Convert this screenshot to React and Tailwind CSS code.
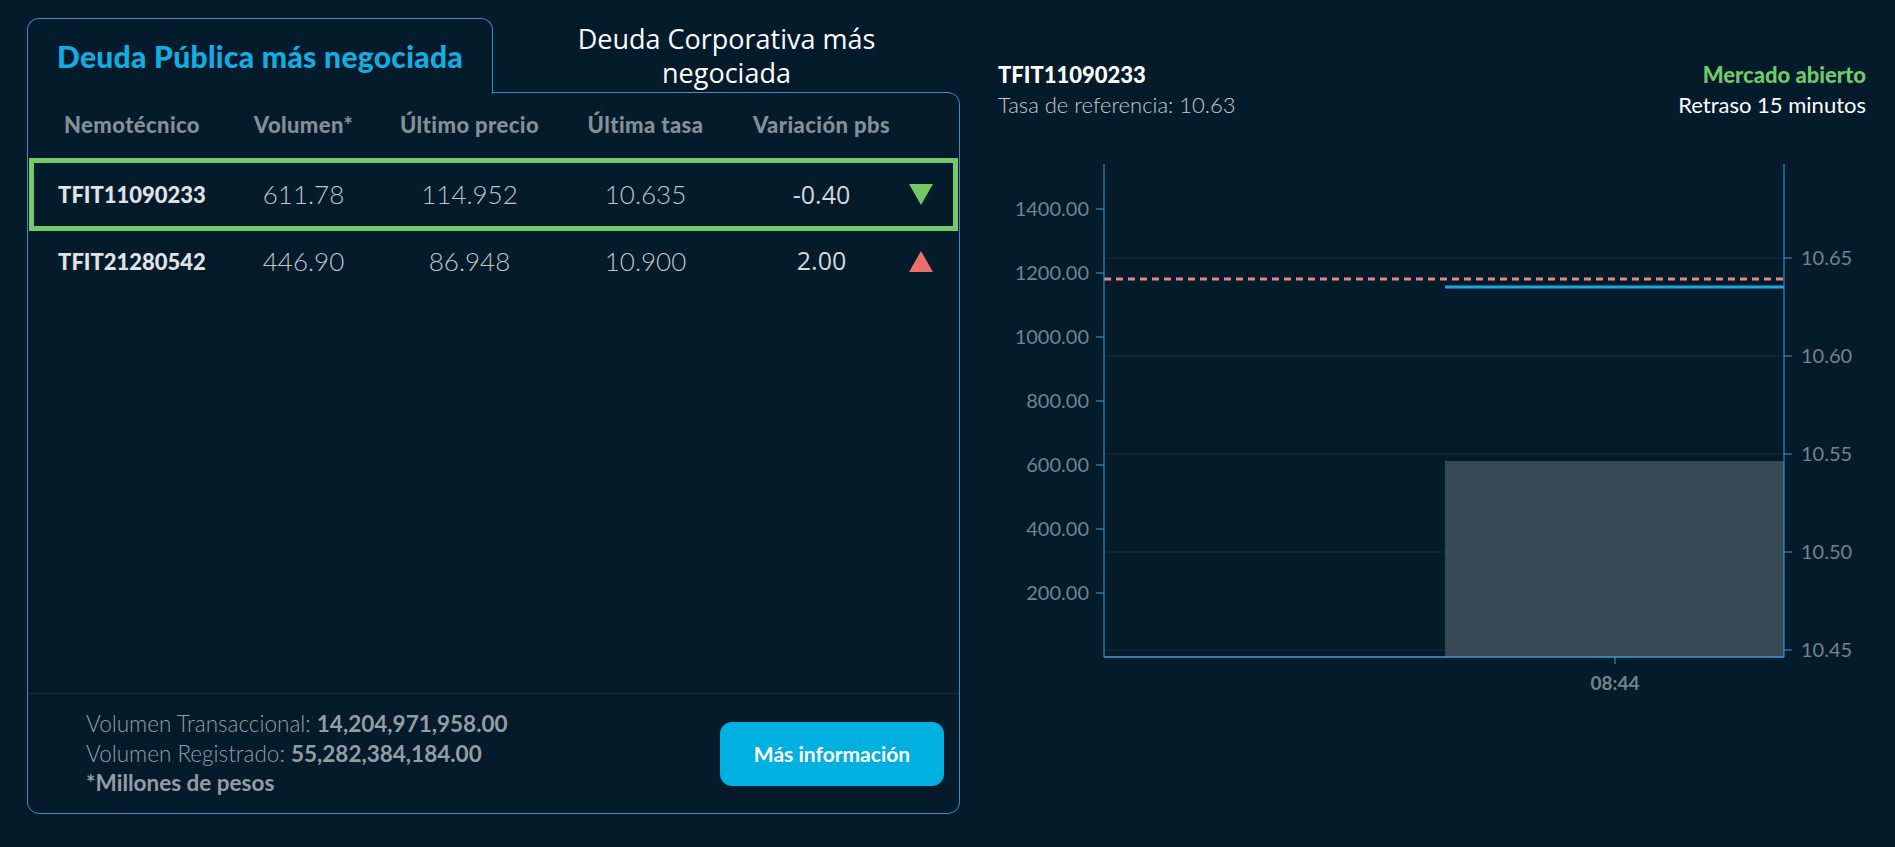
import React from "react";

const rows = [
  { code: "TFIT11090233", vol: "611.78", price: "114.952", rate: "10.635", delta: "-0.40", up: false, selected: true },
  { code: "TFIT21280542", vol: "446.90", price: "86.948", rate: "10.900", delta: "2.00", up: true, selected: false },
];

const cols = "grid grid-cols-[172px_171px_161px_191px_161px_37px] items-center";

function Arrow({ up }) {
  return up ? (
    <svg width="24" height="21" viewBox="0 0 24 21" className="mx-auto">
      <polygon points="12,0 24,21 0,21" fill="#e8706c" />
    </svg>
  ) : (
    <svg width="24" height="21" viewBox="0 0 24 21" className="mx-auto">
      <polygon points="0,0 24,0 12,21" fill="#70c965" />
    </svg>
  );
}

function TablePanel() {
  return (
    <div className="w-[933px] flex flex-col">
      {/* tabs */}
      <div className="flex h-[75px] relative z-10 -mb-px">
        <div className="w-[466px] h-[76px] border border-b-0 border-[#3b8dbd] rounded-t-[12px] bg-[#041b2c] flex items-center justify-center">
          <span className="text-[30px] font-black text-[#14ade2] tracking-[0.3px]">Deuda Pública más negociada</span>
        </div>
        <div className="flex-1 flex items-center justify-center text-center">
          <span className="font-['Open_Sans',sans-serif] text-[27px] leading-[34px] text-white w-[330px]">
            Deuda Corporativa más negociada
          </span>
        </div>
      </div>

      <div className="h-[722px] border border-[#3b8dbd] rounded-b-[12px] rounded-tr-[12px] flex flex-col">
        {/* header */}
        <div className={`${cols} h-[65px] mx-px pl-[17px] pb-[2px] text-[22px] tracking-[0.4px] font-black text-[#858f96] text-center`}>
          <span>Nemotécnico</span>
          <span>Volumen*</span>
          <span>Último precio</span>
          <span>Última tasa</span>
          <span>Variación pbs</span>
          <span></span>
        </div>

        {rows.map((r) => (
          <div
            key={r.code}
            className={`${cols} mx-px pl-[12px] text-center border-[5px] ${
              r.selected ? "h-[73px] border-[#72c86a]" : "h-[60px] border-transparent"
            }`}
          >
            <span className="text-[22px] font-black text-[#e0e3e6]">{r.code}</span>
            <span className="text-[26px] font-light text-[#c0c6cb]">{r.vol}</span>
            <span className="text-[26px] font-light text-[#c0c6cb]">{r.price}</span>
            <span className="text-[26px] font-light text-[#c0c6cb]">{r.rate}</span>
            <span className="font-['Open_Sans',sans-serif] text-[25px] text-[#d4d8db]">{r.delta}</span>
            <Arrow up={r.up} />
          </div>
        ))}

        <div className="flex-1" />

        {/* footer */}
        <div className="h-[120px] border-t border-[#172b3a] flex items-center justify-between pl-[58px] pr-[15px]">
          <div className="text-[22.5px] leading-[29.5px] text-[#959da3]">
            <div>
              <span className="font-light">Volumen Transaccional: </span>
              <span className="font-bold">14,204,971,958.00</span>
            </div>
            <div>
              <span className="font-light">Volumen Registrado: </span>
              <span className="font-bold">55,282,384,184.00</span>
            </div>
            <div className="font-bold">*Millones de pesos</div>
          </div>
          <button className="w-[224px] h-[64px] rounded-[12px] bg-[#00b0e0] text-white text-[21px] font-bold">
            Más información
          </button>
        </div>
      </div>
    </div>
  );
}

function Chart() {
  const leftTicks = [
    ["1400.00", 59],
    ["1200.00", 123],
    ["1000.00", 187],
    ["800.00", 251],
    ["600.00", 315],
    ["400.00", 379],
    ["200.00", 443],
  ];
  const rightTicks = [
    ["10.65", 108],
    ["10.60", 206],
    ["10.55", 304],
    ["10.50", 402],
    ["10.45", 500],
  ];
  const axis = "#3a9fd4";
  const label = "#74838c";
  return (
    <svg width="868" height="550" viewBox="0 0 868 550" className="block">
      {rightTicks.map(([t, y]) => (
        <line key={"g" + t} x1="106" x2="786" y1={y} y2={y} stroke="#12303f" strokeWidth="1" />
      ))}
      <rect x="447" y="311" width="339" height="196" fill="#364954" />
      <line x1="106" x2="786" y1="129" y2="129" stroke="#e8867b" strokeWidth="3" strokeDasharray="7 5" />
      <line x1="447" x2="786" y1="137" y2="137" stroke="#1aa9dd" strokeWidth="3" />
      <line x1="106" x2="106" y1="14" y2="507" stroke={axis} strokeWidth="1" />
      <line x1="786" x2="786" y1="14" y2="507" stroke={axis} strokeWidth="1" />
      <line x1="106" x2="786" y1="507" y2="507" stroke={axis} strokeWidth="1.5" />
      {leftTicks.map(([t, y]) => (
        <g key={t}>
          <line x1="98" x2="106" y1={y} y2={y} stroke={axis} strokeWidth="1" />
          <text x="91" y={y + 7} textAnchor="end" fontFamily="Lato, sans-serif" fontSize="20" fill={label}>
            {t}
          </text>
        </g>
      ))}
      {rightTicks.map(([t, y]) => (
        <g key={t}>
          <line x1="786" x2="794" y1={y} y2={y} stroke={axis} strokeWidth="1" />
          <text x="803" y={y + 7} fontFamily="Lato, sans-serif" fontSize="20" fill={label}>
            {t}
          </text>
        </g>
      ))}
      <line x1="617" x2="617" y1="507" y2="514" stroke={axis} strokeWidth="1" />
      <text x="617" y="540" textAnchor="middle" fontFamily="Lato, sans-serif" fontSize="19" fontWeight="bold" fill={label}>
        08:44
      </text>
    </svg>
  );
}

function DetailPanel() {
  return (
    <div className="w-[868px] pt-[42px]">
      <div className="flex justify-between leading-[30px]">
        <div>
          <div className="text-[22px] font-black text-white">TFIT11090233</div>
          <div className="text-[22px] font-light text-[#c6cbcf]">Tasa de referencia: 10.63</div>
        </div>
        <div className="text-right">
          <div className="text-[22px] font-black text-[#72c86a]">Mercado abierto</div>
          <div className="text-[22px] text-white">Retraso 15 minutos</div>
        </div>
      </div>
      <div className="mt-[30px]">
        <Chart />
      </div>
    </div>
  );
}

export default function App() {
  return (
    <div className="min-h-screen w-full bg-[#041b2c] font-['Lato',sans-serif] flex pt-[18px] pl-[27px]">
      <TablePanel />
      <div className="ml-[38px]">
        <DetailPanel />
      </div>
    </div>
  );
}
